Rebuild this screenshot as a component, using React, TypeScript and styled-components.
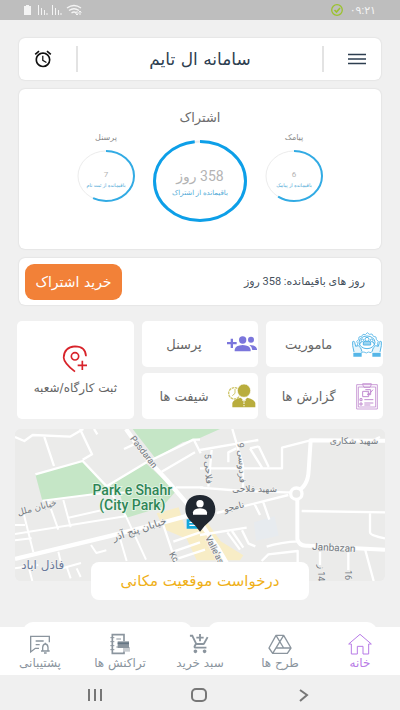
import React from "react";
import styled, { createGlobalStyle } from "styled-components";
import { MdAlarm, MdAddShoppingCart } from "react-icons/md";

const GlobalStyle = createGlobalStyle`
  * { box-sizing: border-box; }
  body { margin: 0; background: #f0f0f0; font-family: "DejaVu Sans", sans-serif; }
  button { font-family: inherit; border: 0; padding: 0; background: none; cursor: pointer; }
  h1, h2, p { margin: 0; font-weight: 400; }
`;

const Screen = styled.div`
  height: 100vh;
  display: flex;
  flex-direction: column;
  overflow: hidden;
`;

const StatusBar = styled.header`
  flex: none;
  height: 20px;
  padding: 0 24px;
  display: flex;
  align-items: center;
  justify-content: space-between;
  background: #bebebe;
  color: #f4f4f4;
  font-family: Roboto, "DejaVu Sans", sans-serif;
  font-size: 11px;
`;

const StatusGroup = styled.div`
  display: flex;
  align-items: center;
  gap: 7px;
`;

const Main = styled.main`
  flex: 1;
  min-height: 0;
  overflow: hidden;
  padding: 18px 15px 0;
`;

const Card = styled.section`
  margin: 0 4px;
  background: #fff;
  border-radius: 6px;
  box-shadow: 0 0 2px rgba(0, 0, 0, 0.14);
`;

const TitleBar = styled(Card)`
  height: 42px;
  display: flex;
  align-items: center;
  padding: 0 14px;
`;

const IconButton = styled.button`
  display: flex;
  width: 20px;
  color: #2d3e50;
`;

const Divider = styled.span`
  width: 2px;
  height: 26px;
  margin: 0 23px;
  background: #e3e3e3;
`;

const Title = styled.h1`
  flex: 1;
  text-align: center;
  font-size: 17px;
  color: #2d3e50;
`;

const PlanCard = styled(Card)`
  margin-top: 9px;
  height: 160px;
  padding-top: 19px;
  text-align: center;
`;

const PlanTitle = styled.h2`
  font-size: 13px;
  line-height: 20px;
  color: #6b6b6b;
`;

const Gauges = styled.div`
  display: flex;
  justify-content: center;
  gap: 18px;
`;

const GaugeColumn = styled.div<{ $large?: boolean }>`
  padding-top: ${(p) => (p.$large ? 12 : 0)}px;
`;

const GaugeLabel = styled.h2`
  font-size: 8px;
  line-height: 20px;
  height: 22px;
  color: #8a8a8a;
`;

const Ring = styled.div<{ $large?: boolean }>`
  display: grid;
  width: ${(p) => (p.$large ? 94 : 58)}px;
  height: ${(p) => (p.$large ? 82 : 52)}px;
  > * { grid-area: 1 / 1; }
`;

const RingText = styled.div<{ $large?: boolean }>`
  display: flex;
  flex-direction: column;
  justify-content: center;
  padding-top: 5px;
  font-family: Roboto, "DejaVu Sans", sans-serif;
  font-size: ${(p) => (p.$large ? 14 : 8)}px;
  line-height: ${(p) => (p.$large ? 18 : 12)}px;
  color: #b4b4b4;
  small {
    font-size: ${(p) => (p.$large ? 7 : 5)}px;
    line-height: ${(p) => (p.$large ? 16 : 8)}px;
    color: #4fa9d6;
    white-space: nowrap;
  }
`;

const DaysCard = styled(Card)`
  margin-top: 9px;
  height: 47px;
  padding: 0 16px 0 6px;
  display: flex;
  align-items: center;
  justify-content: space-between;
  color: #45505c;
`;

const DaysText = styled.p`
  font-family: Roboto, "DejaVu Sans", sans-serif;
  font-size: 11px;
`;

const BuyButton = styled.button`
  width: 97px;
  height: 36px;
  border-radius: 9px;
  background: #f28138;
  color: #fff;
  font-size: 14px;
`;

const Tiles = styled.div`
  display: grid;
  grid-template-columns: repeat(3, 1fr);
  grid-auto-rows: 46px;
  gap: 6px 8px;
  margin: 16px 2px 0;
`;

const Tile = styled.button<{ $tall?: boolean }>`
  grid-row: ${(p) => (p.$tall ? "1 / span 2" : "auto")};
  grid-column: ${(p) => (p.$tall ? "3" : "auto")};
  display: flex;
  flex-direction: ${(p) => (p.$tall ? "column" : "row")};
  align-items: center;
  justify-content: ${(p) => (p.$tall ? "center" : "flex-start")};
  gap: ${(p) => (p.$tall ? 8 : 0)}px;
  border-radius: 5px;
  background: #fff;
  color: #666;
  font-size: ${(p) => (p.$tall ? 12 : 13)}px;
`;

const TileIcon = styled.span`
  display: flex;
  justify-content: center;
  width: 32px;
`;

const TileLabel = styled.span`
  flex: 1;
  text-align: center;
  white-space: nowrap;
`;

const MapBox = styled.div`
  margin-top: 10px;
  height: 152px;
  border-radius: 6px;
  overflow: hidden;
  background: #ebebea;
  svg { display: block; width: 100%; height: 100%; }
`;

const LocationButton = styled.button`
  position: relative;
  display: block;
  width: 59%;
  height: 38px;
  margin: -19px auto 0;
  border-radius: 8px;
  background: #fff;
  color: #efb018;
  font-size: 15px;
`;

const NextCards = styled.div`
  display: grid;
  grid-template-columns: 1fr 1fr;
  gap: 16px;
  margin: 22px 8px 0;
  div { height: 80px; border-radius: 10px; background: #fff; }
`;

const TabBar = styled.nav`
  position: relative;
  flex: none;
  height: 48px;
  display: flex;
  background: #fff;
`;

const Tab = styled.button<{ $active?: boolean }>`
  flex: 1;
  display: flex;
  flex-direction: column;
  align-items: center;
  padding-top: 6px;
  color: ${(p) => (p.$active ? "#b77be6" : "#8b959e")};
  font-size: 12px;
  line-height: 16px;
  svg { flex: none; }
`;

const SystemBar = styled.footer`
  flex: none;
  height: 35px;
  padding: 4px 84px 0 82px;
  display: flex;
  align-items: center;
  justify-content: space-between;
  color: #777;
`;

const SystemButton = styled.button`
  display: flex;
  color: inherit;
`;

type GaugeProps = { large?: boolean; label?: string; value: string; note: string; percent: number };

function Gauge({ large, label, value, note, percent }: GaugeProps) {
  const [w, h, s] = large ? [94, 82, 3] : [58, 52, 2];
  const rx = w / 2 - s / 2;
  const ry = h / 2 - s / 2;
  const d = `M${w / 2} ${s / 2} a${rx} ${ry} 0 0 1 0 ${ry * 2} a${rx} ${ry} 0 0 1 0 ${-ry * 2}`;
  return (
    <GaugeColumn $large={large}>
      {label && <GaugeLabel>{label}</GaugeLabel>}
      <Ring $large={large}>
        <svg width={w} height={h} fill="none">
          <path d={d} stroke="#ececec" strokeWidth={large ? 2 : 1} />
          <path d={d} stroke={large ? "#0d9fe8" : "#32abe4"} strokeWidth={s} pathLength={100} strokeDasharray={`${percent} 100`} />
        </svg>
        <RingText $large={large}>
          <span>{value}</span>
          <small>{note}</small>
        </RingText>
      </Ring>
    </GaugeColumn>
  );
}

const BatterySignalIcon = () => (
  <svg width="60" height="12" viewBox="0 0 60 12" fill="none" stroke="#f4f4f4">
    <path d="M0 2h2V1h3v1h2v9H0z" fill="#f4f4f4" stroke="none" />
    <path d="M14.5 1v10M17.5 4v7M20.5 6v5M23 9v2M28.5 1v10M31.5 4v7M34.5 6v5M37 9v2" />
    <path d="M43 4q7-5 14 0M45 6.500q5-3.500 10 0M47.500 9q2.500-2 5 0" strokeWidth="1.300" />
    <path d="M53 7v4M56 7v4M51.500 9.500L53 11l1.500-1.500M54.500 8.500L56 7l1.500 1.500" />
  </svg>
);

const CheckIcon = () => (
  <svg width="12" height="12" viewBox="0 0 12 12" fill="none" stroke="#9bc22e" strokeWidth="1.300">
    <circle cx="6" cy="6" r="5.300" /><path d="M3.500 6l2 2 3.500-4" strokeWidth="1.600" />
  </svg>
);

const MenuIcon = () => (
  <svg width="20" height="14" viewBox="0 0 20 14" stroke="currentColor" strokeWidth="1.700">
    <path d="M1 2.500h18M1 7h18M1 11.500h18" />
  </svg>
);

const MissionIcon = () => (
  <svg width="30" height="27" viewBox="0 0 90 81" fill="none" stroke="#55b6e8" strokeWidth="3">
    <path d="M20 50l-5-5 2-7-3-7 6-5 1-8 8-2 4-6 7 1 6-6 6 5 8-1 4 7 8 2 1 8 6 5-3 7 2 7-5 6-2 7-8 1-6 6-8-2-6 3-7-3-8 1-5-6-8-2z" strokeWidth="2.500" />
    <ellipse cx="45" cy="34" rx="24" ry="19" />
    <path d="M34 42v-6q0-5 6-5h10q6 0 6 5v6zM23 43v-5q0-5 6-5M67 43v-5q0-5-6-5" fill="#9bd3f0" />
    <circle cx="45" cy="25" r="6" fill="#fff" /><circle cx="31" cy="28" r="4" fill="#fff" /><circle cx="59" cy="28" r="4" fill="#fff" />
    <path d="M6 63L2 44V32q4-4 6 2l3 12 8-2q9 5 11 18M84 63l4-19V32q-4-4-6 2l-3 12-8-2q-9 5-11 18" fill="#e6f5fc" />
    <path d="M4 65h25v12H4zM61 65h25v12H61z" fill="#55b6e8" stroke="none" />
  </svg>
);

const StaffIcon = () => (
  <svg width="30" height="16" viewBox="0 0 90 48" fill="#7b76dc">
    <path d="M11 8h7v10h11v7H18v11h-7V25H0v-7h11z" />
    <circle cx="47" cy="12" r="11" /><circle cx="72" cy="11" r="9" />
    <path d="M23 46v-5q2-13 24-14 22 1 24 14v5zM67 27q20 0 23 12v3H76q0-9-9-15z" />
  </svg>
);

const ReportIcon = () => (
  <svg width="22" height="27" viewBox="0 0 66 81" fill="none" stroke="#c18bd0" strokeWidth="2.500">
    <path d="M2 5h62v73H2zM7 12h52v60H7zM20 5V2h26v3l-4 8H24z" />
    <path d="M20 25h18v16H20zM28 20h16v15H33M34 29l5 5 12-14" strokeWidth="3" />
    <path d="M12 47h6v6h-6zM12 60h6v6h-6zM25 50h27M25 60h27M25 66h18" strokeWidth="3" />
  </svg>
);

const ShiftIcon = () => (
  <svg width="28" height="24" viewBox="0 0 84 72">
    <circle cx="19" cy="28" r="17" fill="none" stroke="#cfc66c" strokeWidth="4" strokeDasharray="8 2" />
    <path d="M21 15v13l-8 7" fill="none" stroke="#cfc66c" strokeWidth="3" />
    <circle cx="48" cy="20" r="20" fill="#b9ad3d" stroke="#fff" strokeWidth="2" />
    <path d="M13 70V57q2-10 25-16l10 9 10-9q22 6 24 16v13z" fill="#b9ad3d" />
    <path d="M42 47l6 5 6-5M48 55v5M48 63v4" fill="none" stroke="#fff" strokeWidth="3" />
  </svg>
);

const AddPlaceIcon = () => (
  <svg width="26" height="28" viewBox="0 0 78 84" fill="none" stroke="#d8232a" strokeWidth="5">
    <path d="M72 34Q71 4 39 4 6 6 5 38q1 17 34 42" />
    <circle cx="39" cy="34" r="11" /><path d="M61 47v28M47 61h28" />
  </svg>
);

const HomeIcon = () => (
  <svg width="24" height="22" viewBox="0 0 72 66" fill="none" stroke="currentColor" strokeWidth="3">
    <path d="M2 33L36 4l34 29h-8v30H45V40H28v23H10V33z" />
  </svg>
);

const DriveIcon = () => (
  <svg width="24" height="22" viewBox="0 0 72 66" fill="none" stroke="currentColor" strokeWidth="4" strokeLinejoin="round">
    <path d="M24 7h23l22 38-11 16H14L3 45zM24 7l23 38h22M47 7L14 61M36 25L24 45h23" />
  </svg>
);

const TransactionIcon = () => (
  <svg width="22" height="22" viewBox="0 0 66 66" fill="none" stroke="currentColor" strokeWidth="3">
    <path d="M10 20V5h35v20M10 46v15h35V51M10 5v56" strokeWidth="5" />
    <path d="M4 14h12M4 26h12M4 38h12M4 50h12M22 18h14M22 42h8" />
    <path d="M42 42h21v14H42z" fill="#c9cdd1" stroke="none" />
    <path d="M26 25h34v20H26z" fill="currentColor" stroke="none" />
    <path d="M26 31h34" stroke="#657684" strokeWidth="5" />
  </svg>
);

const SupportIcon = () => (
  <svg width="22" height="22" viewBox="0 0 66 66" fill="none" stroke="currentColor" strokeWidth="4">
    <path d="M30 46H19L5 57V10h56v18M20 24h24M20 35h12" />
    <path d="M36 54h26M41 54V43q1-10 8-10t8 10v11M45 60h8M49 29v4" />
  </svg>
);

const CityMap = () => (
  <svg viewBox="45 12 1110 456" preserveAspectRatio="xMidYMid slice" role="img" aria-label="نقشه">
    <path fill="#ebebea" d="M45 12h1110v456H45z" />
    <g fill="#c5e6c6">
      <path d="M106 148l142-40 72 76-28 22-165 21z" />
      <path d="M330 178l108-63 90 83-42 48-106 32-20-70z" />
      <path d="M398 12h262l-62 28-50 12-82 48z" />
    </g>
    <path fill="#f8edc6" d="M470 265l66-18 20 65 60-28 46 65 68 42-10 15H590l-30-65-68-28z" />
    <path fill="#e7ebef" d="M762 292l62-18 12 58-68 15z" />
    <g fill="none" stroke="#fff" strokeWidth="7" strokeLinejoin="round">
      <path d="M45 36l28 12 25-18 112 5 40-23M133 36l29 87M240 12l36 76-28 16M106 148l142-40 72 76 116-70 144-70h20M282 12l10 16M372 72l30-14" />
      <path d="M127 227l165-21 98-4M190 225l22 82M145 230l30 84M205 278l125-28M320 184l58 90 60 130M45 327l330-53M45 300h30M45 346l50-6M72 270l28 112" strokeWidth="6" />
      <path d="M360 340l20 68M273 360l16 24 30-8M175 380l12 50 56-16M200 425l12 35M230 430l12 26M45 430l70-10M85 422l12 46" strokeWidth="6" />
      <path d="M45 402l280-68 165-42 110-30M378 12l62 88 60 65 64 74 90 130 35 60" strokeWidth="13" />
      <path d="M485 140l100-58M528 187h82M582 45l20 40M490 300l36 108M520 350l80-28M520 380l80-28M535 400l80-26" />
      <path d="M600 75l175-30M697 12l32 110v80M635 75l-10 110M600 130h246V68l85-22M685 112V82l24-12M750 70l36 58M776 64l30 62M750 70l26-6M600 188l130 10 155 5" />
      <path d="M650 264l215-54M762 234l18 36M788 226l20 58M600 330l140-22M682 322l38 52M696 318l34 50M726 316l20 40 20 8M800 365q40-14 98-16M785 408l20-20 88-10v48M960 380v40M1045 375v60" />
      <path d="M905 258l250 4M1110 262v60q0 10 45 18M1095 372l26 96M1110 50l30-14" />
      <path d="M1155 47L932 46l-6 90q-2 50-38 64M932 46l-6 90M892 220v122q5 22 30 20l233 12" strokeWidth="12" />
      <circle cx="889" cy="206" r="17" fill="#e9e9e8" strokeWidth="10" />
    </g>
    <g fill="#737981" fontSize="27" textAnchor="middle" stroke="#f1f1f0" strokeWidth="4" paintOrder="stroke">
      <text transform="translate(424 86) rotate(52)" fontFamily="Roboto, sans-serif">Pasdaran</text>
      <text transform="translate(113 256) rotate(-15)">خیابان ملل</text>
      <text transform="translate(421 322) rotate(-18)" fontSize="30">خیابان پنج آذر</text>
      <text transform="translate(638 382) rotate(63)" fontFamily="Roboto, sans-serif">Valie'asr</text>
      <text transform="translate(514 400) rotate(60)" fontFamily="Roboto, sans-serif">Kc</text>
      <text transform="translate(616 132) rotate(87)" fontFamily="Roboto, DejaVu Sans, sans-serif">فلاحی 5</text>
      <text transform="translate(716 114) rotate(87)" fontFamily="Roboto, DejaVu Sans, sans-serif">فردوسی 9</text>
      <text x="1062" y="56">شهید شکاری</text>
      <text x="764" y="200">شهید فلاحی</text>
      <text transform="translate(704 254) rotate(-14)">نامجو</text>
      <text transform="translate(1001 378) rotate(3)" fontFamily="Roboto, sans-serif" fontSize="30">Janbazan</text>
      <text transform="translate(954 444) rotate(90)" fontFamily="Roboto, DejaVu Sans, sans-serif">14 ز</text>
      <text transform="translate(1036 450) rotate(90)" fontFamily="Roboto, sans-serif">16</text>
      <text x="128" y="432" fontSize="36" fill="#69799b">فاذل اباد</text>
    </g>
    <g fill="#2e8656" fontFamily="Roboto, sans-serif" fontSize="42" fontWeight="500" textAnchor="middle" stroke="#e9f5ea" strokeWidth="5" paintOrder="stroke">
      <text x="397" y="210">Park e Shahr</text>
      <text x="397" y="254">(City Park)</text>
    </g>
    <path d="M560 283h40v28h-40z" fill="#12a8dc" />
    <path d="M568 290h22v4h-22zM568 299h22v4h-22z" fill="#fff" />
    <path d="M600 320q-12-18-32-36-12-14-12-32 2-40 44-42 43 2 46 42 0 18-12 32-22 18-34 36z" fill="#202730" />
    <circle cx="600" cy="236" r="11" fill="#fff" /><path d="M579 269v-7q1-10 21-12 20 2 21 12v7z" fill="#fff" />
  </svg>
);

export default function App() {
  return (
    <Screen dir="rtl">
      <GlobalStyle />
      <StatusBar>
        <StatusGroup><span>۰۹:۲۱</span><CheckIcon /></StatusGroup>
        <BatterySignalIcon />
      </StatusBar>
      <Main>
        <TitleBar as="div">
          <IconButton aria-label="منو"><MenuIcon /></IconButton>
          <Divider />
          <Title>سامانه ال تایم</Title>
          <Divider />
          <IconButton aria-label="زنگ ساعت"><MdAlarm size={20} color="#111" /></IconButton>
        </TitleBar>
        <PlanCard>
          <PlanTitle>اشتراک</PlanTitle>
          <Gauges>
            <Gauge label="پیامک" value="6" note="باقیمانده از پیامک" percent={60} />
            <Gauge large value="358 روز" note="باقیمانده از اشتراک" percent={98} />
            <Gauge label="پرسنل" value="7" note="باقیمانده از ثبت نام" percent={58} />
          </Gauges>
        </PlanCard>
        <DaysCard>
          <DaysText>روز های باقیمانده: 358 روز</DaysText>
          <BuyButton>خرید اشتراک</BuyButton>
        </DaysCard>
        <Tiles>
          <Tile><TileIcon><MissionIcon /></TileIcon><TileLabel>ماموریت</TileLabel></Tile>
          <Tile><TileIcon><StaffIcon /></TileIcon><TileLabel>پرسنل</TileLabel></Tile>
          <Tile $tall><AddPlaceIcon /><span>ثبت کارگاه/شعبه</span></Tile>
          <Tile><TileIcon><ReportIcon /></TileIcon><TileLabel>گزارش ها</TileLabel></Tile>
          <Tile><TileIcon><ShiftIcon /></TileIcon><TileLabel>شیفت ها</TileLabel></Tile>
        </Tiles>
        <MapBox><CityMap /></MapBox>
        <LocationButton>درخواست موقعیت مکانی</LocationButton>
        <NextCards><div /><div /></NextCards>
      </Main>
      <TabBar>
        <Tab $active><HomeIcon />خانه</Tab>
        <Tab><DriveIcon />طرح ها</Tab>
        <Tab><MdAddShoppingCart size={22} />سبد خرید</Tab>
        <Tab><TransactionIcon />تراکنش ها</Tab>
        <Tab><SupportIcon />پشتیبانی</Tab>
      </TabBar>
      <SystemBar dir="ltr">
        <SystemButton aria-label="برنامه‌ها">
          <svg width="26" height="16" stroke="currentColor" strokeWidth="2"><path d="M7 2v12M13 2v12M19 2v12" /></svg>
        </SystemButton>
        <SystemButton aria-label="صفحه اصلی">
          <svg width="18" height="16" fill="none" stroke="currentColor" strokeWidth="2"><rect x="2" y="2" width="14" height="12" rx="4" /></svg>
        </SystemButton>
        <SystemButton aria-label="بازگشت">
          <svg width="26" height="16" fill="none" stroke="currentColor" strokeWidth="2"><path d="M10 3l7 5-7 6" /></svg>
        </SystemButton>
      </SystemBar>
    </Screen>
  );
}
